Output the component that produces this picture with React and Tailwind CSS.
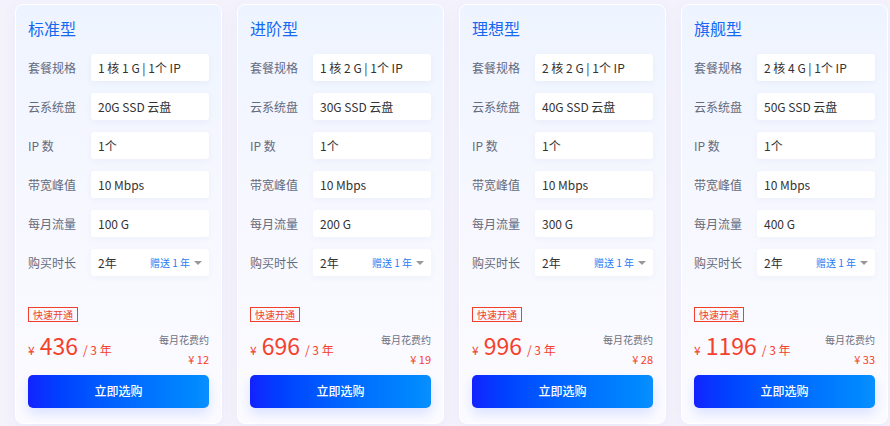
const plans = [
  { name: '标准型', spec: '1 核 1 G | 1个 IP', disk: '20G SSD 云盘', traffic: '100 G', price: '436', monthly: '12' },
  { name: '进阶型', spec: '1 核 2 G | 1个 IP', disk: '30G SSD 云盘', traffic: '200 G', price: '696', monthly: '19' },
  { name: '理想型', spec: '2 核 2 G | 1个 IP', disk: '40G SSD 云盘', traffic: '300 G', price: '996', monthly: '28' },
  { name: '旗舰型', spec: '2 核 4 G | 1个 IP', disk: '50G SSD 云盘', traffic: '400 G', price: '1196', monthly: '33' },
];

function Row({ label, children }) {
  return (
    <div className="flex items-center h-[27px]">
      <div className="w-[63px] shrink-0 text-[12px] text-[#646b7e]">{label}</div>
      <div className="flex-1 h-full bg-white rounded-[3px] shadow-[0_2px_6px_rgba(60,80,160,0.05)] flex items-center px-[7px] text-[12px] text-[#333]">
        {children}
      </div>
    </div>
  );
}

function Card({ plan }) {
  return (
    <div className="w-[207px] h-[420px] shrink-0 rounded-[8px] border border-white bg-gradient-to-b from-[#eef4ff] via-[#f7f8ff] to-[#fbfbff] shadow-[0_4px_14px_rgba(120,120,200,0.08)] px-[12px] pt-[14px]">
      <div className="text-[16px] leading-[18px] text-[#1468f2]">{plan.name}</div>
      <div className="mt-[17px] flex flex-col gap-[12px]">
        <Row label="套餐规格">{plan.spec}</Row>
        <Row label="云系统盘">{plan.disk}</Row>
        <Row label="IP 数">1个</Row>
        <Row label="带宽峰值">10 Mbps</Row>
        <Row label="每月流量">{plan.traffic}</Row>
        <Row label="购买时长">
          <span>2年</span>
          <span className="ml-auto text-[10px] text-[#2a7cf2]">赠送 1 年</span>
          <span className="ml-[4px] w-0 h-0 border-l-[4px] border-r-[4px] border-t-[4px] border-l-transparent border-r-transparent border-t-[#999]" />
        </Row>
      </div>
      <div className="mt-[31px] inline-flex items-center h-[15px] px-[4px] border border-[#f0402c] text-[10px] leading-none text-[#f0402c]">
        快速开通
      </div>
      <div className="mt-[6px] flex items-start justify-between">
        <div className="flex items-baseline text-[#f5402c]">
          <span className="text-[12px] mr-[5px]">¥</span>
          <span className="text-[23px] leading-[30px]">{plan.price}</span>
          <span className="text-[12px] ml-[5px]">/ 3 年</span>
        </div>
        <div className="text-right pt-[4px]">
          <div className="text-[10px] leading-[12px] text-[#6b7184]">每月花费约</div>
          <div className="mt-[7px] text-[11px] leading-[12px] text-[#f5402c]">¥ {plan.monthly}</div>
        </div>
      </div>
      <button className="mt-[10px] w-full h-[33px] rounded-[5px] bg-gradient-to-r from-[#1221ff] to-[#0a8fff] text-white text-[12px] font-medium shadow-[0_6px_12px_rgba(40,90,255,0.15)]">
        立即选购
      </button>
    </div>
  );
}

export default function App() {
  return (
    <div className="w-[890px] h-[426px] overflow-hidden bg-[#f4f3fc] pl-[15px] pt-[4px] flex gap-[15px] font-['Noto_Sans_CJK_SC','Noto_Sans',sans-serif]">
      {plans.map((p) => (
        <Card key={p.name} plan={p} />
      ))}
    </div>
  );
}
